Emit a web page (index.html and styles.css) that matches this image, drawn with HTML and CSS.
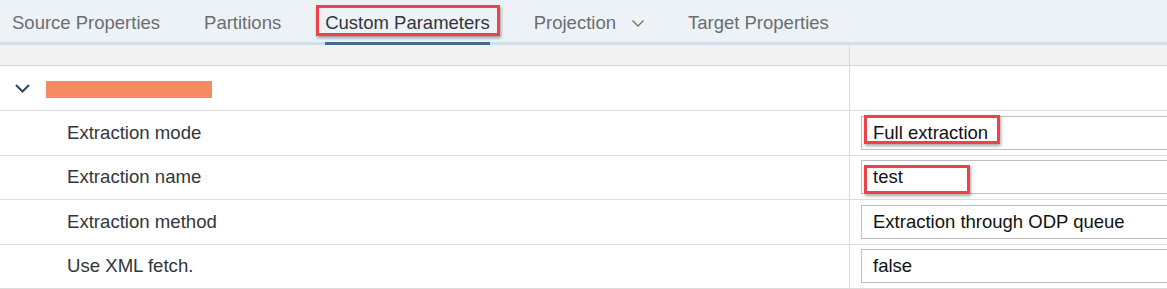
FILE: index.html
```html
<!DOCTYPE html>
<html lang="en">
<head>
  <meta charset="UTF-8">
  <title>Custom Parameters</title>
  <link rel="stylesheet" href="styles.css">
</head>
<body>

<!-- tab strip -->
<nav class="tabs">
  <div class="tab">Source Properties</div>
  <div class="tab">Partitions</div>
  <div class="tab active">Custom Parameters<span class="mark mark-tab"></span></div>
  <div class="tab">Projection
    <svg class="tab-arrow" width="12" height="7" viewBox="0 0 12 7"><polyline points="0.5,0.5 6,6 11.5,0.5" fill="none" stroke="#8a6a55" stroke-width="1.3"/></svg>
  </div>
  <div class="tab">Target Properties</div>
</nav>

<!-- parameter table -->
<div class="table">
  <div class="row head">
    <div class="cell name"></div>
    <div class="cell value"></div>
  </div>

  <div class="row group">
    <div class="cell name">
      <svg class="expander" width="15" height="9" viewBox="0 0 15 9"><polyline points="1,1 7.5,7.5 14,1" fill="none" stroke="#2c4766" stroke-width="2"/></svg>
      <span class="redacted"></span>
    </div>
    <div class="cell value"></div>
  </div>

  <div class="row">
    <div class="cell name label">Extraction mode</div>
    <div class="cell value"><div class="field">Full extraction<span class="mark mark-full"></span></div></div>
  </div>

  <div class="row">
    <div class="cell name label">Extraction name</div>
    <div class="cell value"><div class="field">test<span class="mark mark-test"></span></div></div>
  </div>

  <div class="row">
    <div class="cell name label">Extraction method</div>
    <div class="cell value"><div class="field">Extraction through ODP queue</div></div>
  </div>

  <div class="row">
    <div class="cell name label">Use XML fetch.</div>
    <div class="cell value"><div class="field">false</div></div>
  </div>
</div>

</body>
</html>
```

FILE: styles.css
```css
* { box-sizing: border-box; }
html, body { overflow: hidden; }
body {
  margin: 0;
  width: 1190px;
  font-family: "Liberation Sans", Arial, sans-serif;
  color: #32363a;
  background: #fff;
}

/* tabs */
.tabs {
  display: flex;
  gap: 44px;
  height: 45px;
  padding-left: 12px;
  background: #edf2f7;
  border-bottom: 3px solid #d1e0ef;
}

.tab {
  position: relative;
  display: flex;
  align-items: center;
  height: 45px;
  margin-bottom: -3px;
  padding-top: 3px;
  font-size: 18.5px;
  color: #6a6d70;
  border-bottom: 3px solid transparent;
}

.tab.active {
  color: #32363a;
  border-bottom-color: #46698c;
}

.tab-arrow { margin-left: 16px; margin-top: 2px; }

/* red annotation boxes */
.mark {
  position: absolute;
  border: 3px solid #ef4148;
  box-shadow: 1px 2px 3px rgba(0, 0, 0, 0.35);
  pointer-events: none;
}
.mark-tab { left: -9px; top: 5px; width: 184px; height: 31px; }
.mark-full { left: 2px; top: -2px; width: 136px; height: 29px; }
.mark-test { left: 2px; top: 4px; width: 106px; height: 29px; }

/* table */
.row {
  display: grid;
  grid-template-columns: 850px 1fr;
  height: 44.5px;
  border-bottom: 1px solid #dcdcdc;
}

.row.head {
  height: 21px;
  background: #f2f2f2;
  border-bottom-color: #d6d6d6;
}

.row.group { height: 45px; }

.cell { display: flex; align-items: center; }
.cell.name { border-right: 1px solid #d9d9d9; }

.label {
  padding-left: 67px;
  font-size: 18.6px;
  color: #32363a;
}

.expander { margin-left: 15px; margin-top: 1px; }

.redacted {
  width: 166px;
  height: 17px;
  margin-left: 16px;
  margin-top: 3px;
  background: #f78a62;
}

.value { padding-left: 11px; }

.field {
  position: relative;
  display: flex;
  align-items: center;
  width: 340px;
  height: 34px;
  padding-left: 11px;
  border: 1px solid #bfbfbf;
  font-size: 18.5px;
  color: #111;
}
```
